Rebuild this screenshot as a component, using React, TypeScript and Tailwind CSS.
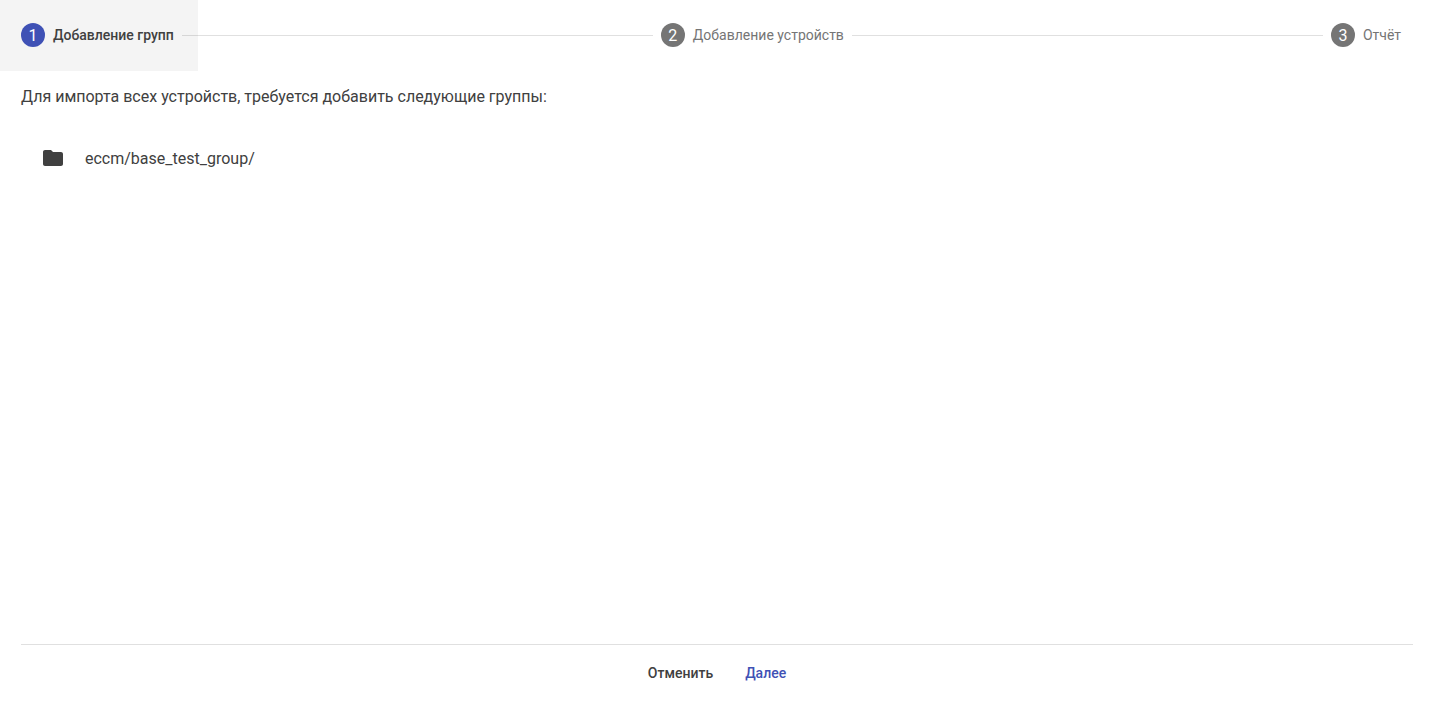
import { Fragment, useState } from 'react';

interface Step {
  id: number;
  label: string;
}

const steps: Step[] = [
  { id: 1, label: 'Добавление групп' },
  { id: 2, label: 'Добавление устройств' },
  { id: 3, label: 'Отчёт' },
];

const groups = ['eccm/base_test_group/'];

function FolderIcon() {
  return (
    <svg viewBox="0 0 24 24" className="h-6 w-6 shrink-0" fill="currentColor" aria-hidden="true">
      <path d="M10 4H4c-1.1 0-1.99.9-1.99 2L2 18c0 1.1.9 2 2 2h16c1.1 0 2-.9 2-2V8c0-1.1-.9-2-2-2h-8l-2-2z" />
    </svg>
  );
}

interface StepHeaderProps {
  step: Step;
  active: boolean;
  onSelect: (id: number) => void;
}

function StepHeader({ step, active, onSelect }: StepHeaderProps) {
  return (
    <button
      type="button"
      aria-current={active ? 'step' : undefined}
      onClick={() => onSelect(step.id)}
      className={`flex h-[71px] shrink-0 items-center px-6 pb-px text-sm whitespace-nowrap ${
        active ? 'bg-[#f4f4f4] font-medium text-[#404040]' : 'text-[#757575]'
      }`}
    >
      <span
        className={`mr-2 flex h-6 w-6 items-center justify-center rounded-full pt-px text-base font-normal text-white ${
          active ? 'bg-[#3f51b5]' : 'bg-[#757575]'
        }`}
      >
        {step.id}
      </span>
      {step.label}
    </button>
  );
}

export default function App() {
  const [current, setCurrent] = useState(1);

  return (
    <div className="flex h-screen flex-col overflow-hidden bg-white font-['Roboto',sans-serif] text-[#404040] antialiased">
      <nav className="-ml-[3px] mr-2 flex items-center">
        {steps.map((step, index) => (
          <Fragment key={step.id}>
            {index > 0 && <div className="z-10 -mx-4 flex-1 border-t border-black/12" />}
            <StepHeader step={step} active={step.id === current} onSelect={setCurrent} />
          </Fragment>
        ))}
      </nav>

      <main className="flex-1 overflow-auto px-[21px] pt-[14px]">
        <p className="text-base">Для импорта всех устройств, требуется добавить следующие группы:</p>
        <ul className="mt-[25px]">
          {groups.map((group) => (
            <li key={group} className="flex h-12 items-center gap-5 px-5">
              <FolderIcon />
              <span className="pt-0.5">{group}</span>
            </li>
          ))}
        </ul>
      </main>

      <footer className="mr-5 ml-[21px] flex h-[77px] items-start justify-center border-t border-black/12 pt-[10px] text-sm font-medium">
        <button type="button" className="h-9 px-4">
          Отменить
        </button>
        <button type="button" className="h-9 px-4 text-[#3f51b5]">
          Далее
        </button>
      </footer>
    </div>
  );
}
